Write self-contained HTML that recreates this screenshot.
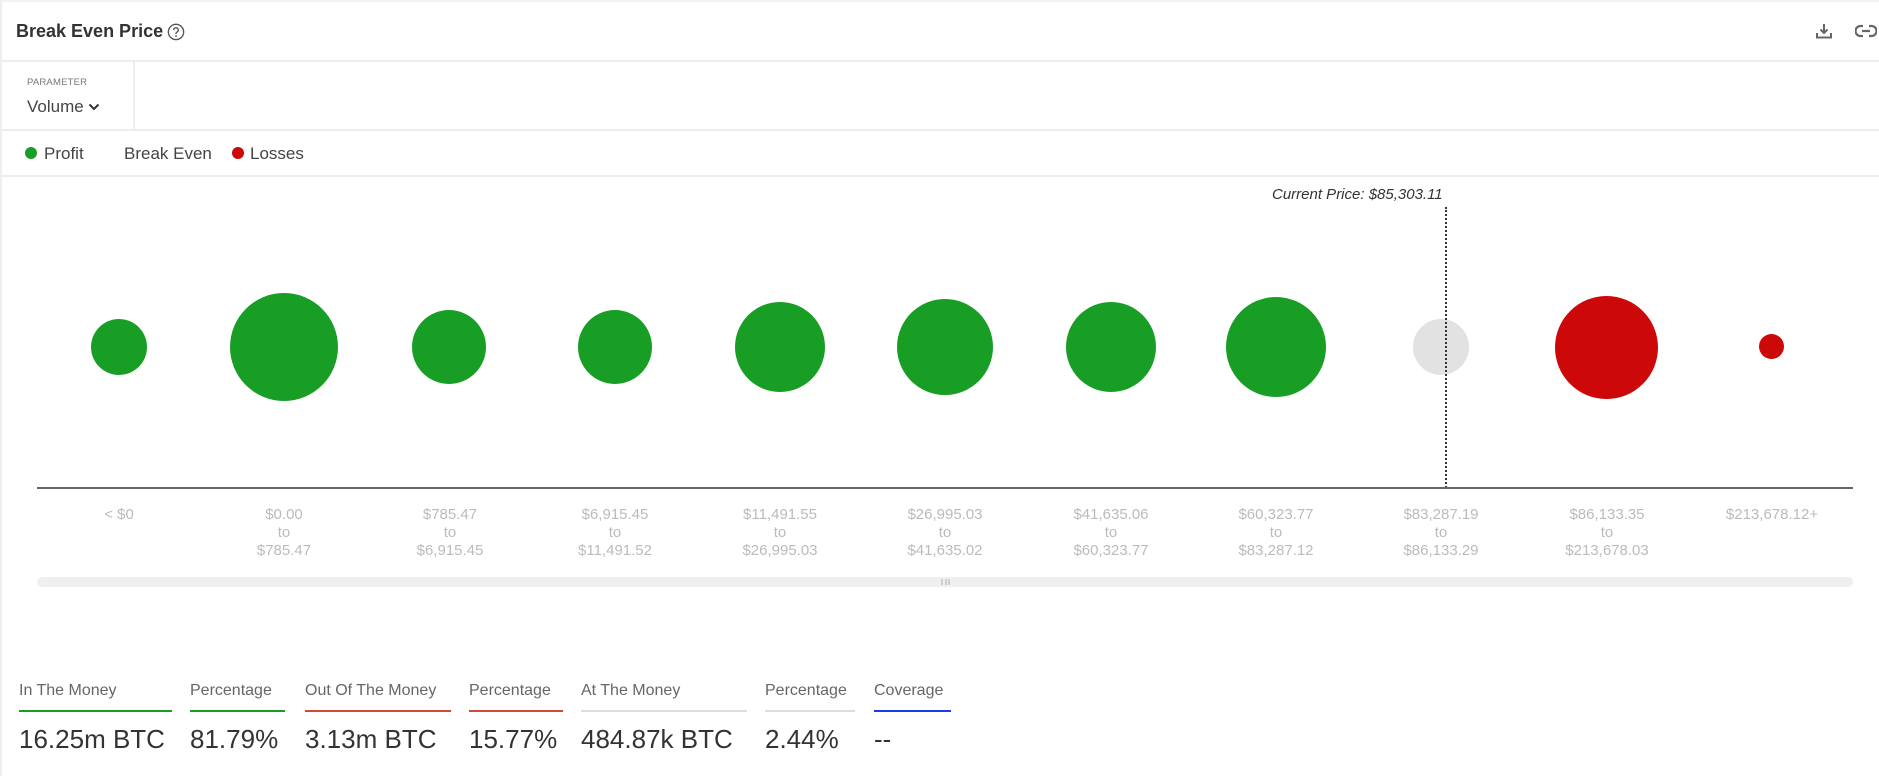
<!DOCTYPE html>
<html><head><meta charset="utf-8"><style>
*{margin:0;padding:0;box-sizing:border-box}
body{width:1879px;height:776px;background:#fff;font-family:"Liberation Sans",sans-serif;position:relative;overflow:hidden;color:#333}
.a{position:absolute;white-space:nowrap}
.hl{position:absolute;left:1px;right:0;height:2px;background:#eee}
.b{position:absolute;border-radius:50%}
.lbl{position:absolute;width:160px;text-align:center;color:#bbb;font-size:15px;line-height:18px;top:506px}
.sl{position:absolute;top:682px;font-size:16px;color:#666}
.ul{position:absolute;top:710px;height:2px}
.sv{position:absolute;top:724px;font-size:26px;color:#333}
</style></head><body>
<div style="position:absolute;left:0;top:0;width:1879px;height:776px;border-left:2px solid #eee;border-top:2px solid #f2f2f2"></div>
<div class="a" style="left:16px;top:21px;font-size:18px;font-weight:bold;color:#333">Break Even Price</div>
<svg class="a" style="left:167px;top:23px" width="18" height="18" viewBox="0 0 16 16"><circle cx="8" cy="8" r="6.8" fill="none" stroke="#555" stroke-width="1.2"/><path d="M6 6.3a2 2 0 1 1 2.8 1.8c-.6.3-.8.7-.8 1.3v.4" fill="none" stroke="#555" stroke-width="1.2"/><circle cx="8" cy="11.6" r=".8" fill="#555"/></svg>
<svg class="a" style="left:1815px;top:22px" width="18" height="18" viewBox="0 0 18 18"><path d="M9 2v9M5.5 7.5L9 11l3.5-3.5M2 11v4.5h14V11" fill="none" stroke="#666" stroke-width="2"/></svg>
<svg class="a" style="left:1855px;top:23px" width="22" height="16" viewBox="0 0 22 16"><path d="M8 3H5.5a5 5 0 0 0 0 10H8M14 3h2.5a5 5 0 0 1 0 10H14M7 8h8" fill="none" stroke="#666" stroke-width="2.2"/></svg>
<div class="hl" style="top:60px"></div>
<div class="a" style="left:27px;top:77px;font-size:9.5px;color:#777;letter-spacing:.2px">PARAMETER</div>
<div class="a" style="left:27px;top:97px;font-size:17px;color:#444">Volume</div>
<svg class="a" style="left:88px;top:102px" width="12" height="10" viewBox="0 0 12 10"><path d="M1.5 2.5L6 7l4.5-4.5" fill="none" stroke="#333" stroke-width="2"/></svg>
<div style="position:absolute;left:133px;top:61px;width:2px;height:69px;background:#eee"></div>
<div class="hl" style="top:129px"></div>
<div class="b" style="left:25px;top:147px;width:12px;height:12px;background:#189e24"></div>
<div class="a" style="left:44px;top:144px;font-size:17px;color:#444">Profit</div>
<div class="a" style="left:124px;top:144px;font-size:17px;color:#444">Break Even</div>
<div class="b" style="left:232px;top:147px;width:12px;height:12px;background:#cc0808"></div>
<div class="a" style="left:250px;top:144px;font-size:17px;color:#444">Losses</div>
<div class="hl" style="top:175px"></div>
<div class="a" style="left:1272px;top:186px;font-size:15px;font-style:italic;color:#333">Current Price: $85,303.11</div>
<div class="b" style="left:91px;top:319px;width:56px;height:56px;background:#189e24"></div>
<div class="b" style="left:230px;top:293px;width:108px;height:108px;background:#189e24"></div>
<div class="b" style="left:412px;top:310px;width:74px;height:74px;background:#189e24"></div>
<div class="b" style="left:578px;top:310px;width:74px;height:74px;background:#189e24"></div>
<div class="b" style="left:735px;top:302px;width:90px;height:90px;background:#189e24"></div>
<div class="b" style="left:897px;top:299px;width:96px;height:96px;background:#189e24"></div>
<div class="b" style="left:1066px;top:302px;width:90px;height:90px;background:#189e24"></div>
<div class="b" style="left:1226px;top:297px;width:100px;height:100px;background:#189e24"></div>
<div class="b" style="left:1413px;top:319px;width:56px;height:56px;background:#e2e2e2"></div>
<div class="b" style="left:1555px;top:296px;width:103px;height:103px;background:#cc0808"></div>
<div class="b" style="left:1759px;top:334px;width:25px;height:25px;background:#cc0808"></div>
<div style="position:absolute;left:1445px;top:207px;height:281px;border-left:2px dotted #333"></div>
<div style="position:absolute;left:37px;top:487px;width:1816px;height:2px;background:#666"></div>
<div class="lbl" style="left:39px">&lt; $0</div>
<div class="lbl" style="left:204px">$0.00<br>to<br>$785.47</div>
<div class="lbl" style="left:370px">$785.47<br>to<br>$6,915.45</div>
<div class="lbl" style="left:535px">$6,915.45<br>to<br>$11,491.52</div>
<div class="lbl" style="left:700px">$11,491.55<br>to<br>$26,995.03</div>
<div class="lbl" style="left:865px">$26,995.03<br>to<br>$41,635.02</div>
<div class="lbl" style="left:1031px">$41,635.06<br>to<br>$60,323.77</div>
<div class="lbl" style="left:1196px">$60,323.77<br>to<br>$83,287.12</div>
<div class="lbl" style="left:1361px">$83,287.19<br>to<br>$86,133.29</div>
<div class="lbl" style="left:1527px">$86,133.35<br>to<br>$213,678.03</div>
<div class="lbl" style="left:1692px">$213,678.12+</div>
<div style="position:absolute;left:37px;top:577px;width:1816px;height:10px;border-radius:5px;background:#efefef"></div>
<div style="position:absolute;left:941px;top:579px;width:9px;height:6px;border-left:2px solid #ccc;border-right:2px solid #ccc"><div style="margin-left:1.5px;width:2px;height:6px;background:#ccc"></div></div>
<div class="sl" style="left:19px">In The Money</div><div class="ul" style="left:19px;width:153px;background:#189e24"></div><div class="sv" style="left:19px">16.25m BTC</div>
<div class="sl" style="left:190px">Percentage</div><div class="ul" style="left:190px;width:95px;background:#189e24"></div><div class="sv" style="left:190px">81.79%</div>
<div class="sl" style="left:305px">Out Of The Money</div><div class="ul" style="left:305px;width:146px;background:#d04a3a"></div><div class="sv" style="left:305px">3.13m BTC</div>
<div class="sl" style="left:469px">Percentage</div><div class="ul" style="left:469px;width:94px;background:#d04a3a"></div><div class="sv" style="left:469px">15.77%</div>
<div class="sl" style="left:581px">At The Money</div><div class="ul" style="left:581px;width:166px;background:#ddd"></div><div class="sv" style="left:581px">484.87k BTC</div>
<div class="sl" style="left:765px">Percentage</div><div class="ul" style="left:765px;width:90px;background:#ddd"></div><div class="sv" style="left:765px">2.44%</div>
<div class="sl" style="left:874px">Coverage</div><div class="ul" style="left:874px;width:77px;background:#1a3ee6"></div><div class="sv" style="left:874px">--</div>
</body></html>
